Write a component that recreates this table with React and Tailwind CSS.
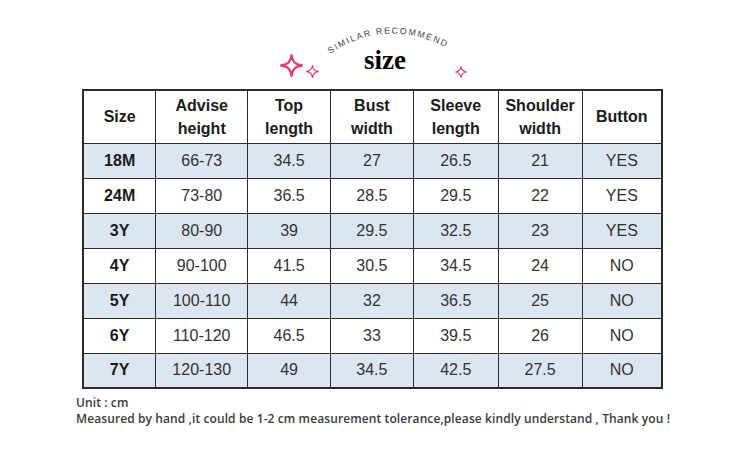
const headers = [
  ["Size"],
  ["Advise", "height"],
  ["Top", "length"],
  ["Bust", "width"],
  ["Sleeve", "length"],
  ["Shoulder", "width"],
  ["Button"],
];

const widths = ["w-[73px]", "w-[92px]", "w-[83px]", "w-[83px]", "w-[85px]", "w-[84px]", "w-[80px]"];

const rows = [
  ["18M", "66-73", "34.5", "27", "26.5", "21", "YES"],
  ["24M", "73-80", "36.5", "28.5", "29.5", "22", "YES"],
  ["3Y", "80-90", "39", "29.5", "32.5", "23", "YES"],
  ["4Y", "90-100", "41.5", "30.5", "34.5", "24", "NO"],
  ["5Y", "100-110", "44", "32", "36.5", "25", "NO"],
  ["6Y", "110-120", "46.5", "33", "39.5", "26", "NO"],
  ["7Y", "120-130", "49", "34.5", "42.5", "27.5", "NO"],
];

function Sparkle({ className }) {
  return (
    <svg viewBox="0 0 20 20" className={className}>
      <path
        d="M10 1 C11 7 13 9 19 10 C13 11 11 13 10 19 C9 13 7 11 1 10 C7 9 9 7 10 1 Z"
        fill="none"
        stroke="#e83e74"
        strokeWidth="2"
        strokeLinejoin="round"
      />
    </svg>
  );
}

export default function App() {
  return (
    <div className="h-[462px] w-[750px] bg-white font-['Liberation_Sans',Arial,sans-serif]">
      {/* title */}
      <div className="flex h-[89px] items-start pl-[280px]">
        <Sparkle className="mt-[54px] h-[23px] w-[23px]" />
        <Sparkle className="ml-[3px] mt-[65px] h-[13px] w-[13px]" />
        <div className="flex w-[136px] flex-col items-center pt-[28px]">
          <svg width="136" height="19" viewBox="0 0 136 19" className="overflow-visible">
            <defs>
              <path id="arc" d="M11 26 Q70 -14 136 24" fill="none" />
            </defs>
            <text fontSize="8.8" fill="#444" letterSpacing="1.6" fontFamily="Liberation Sans, Arial, sans-serif">
              <textPath href="#arc">SIMILAR   RECOMMEND</textPath>
            </text>
          </svg>
          <div className="ml-[-4px] font-['Liberation_Serif',serif] text-[27px] font-bold leading-none text-black">
            size
          </div>
        </div>
        <Sparkle className="mt-[66px] h-[12px] w-[12px]" />
      </div>

      {/* table */}
      <div className="ml-[82px] w-[581px]">
        <table className="border-collapse border-2 border-[#2b2b2b] text-center text-[16px] text-[#1a1a1a]">
          <thead>
            <tr className="h-[53px] bg-white">
              {headers.map((h, i) => (
                <th key={i} className={`${widths[i]} border border-[#2b2b2b] p-0 font-bold leading-[23px]`}>
                  {h.map((line) => (
                    <div key={line}>{line}</div>
                  ))}
                </th>
              ))}
            </tr>
          </thead>
          <tbody>
            {rows.map((r, ri) => (
              <tr key={r[0]} className={`h-[35px] ${ri % 2 === 0 ? "bg-[#dce6f1]" : "bg-white"}`}>
                {r.map((c, ci) => (
                  <td
                    key={ci}
                    className={`border border-[#2b2b2b] p-0 ${ci === 0 ? "font-bold" : "font-normal text-[#333]"}`}
                  >
                    {c}
                  </td>
                ))}
              </tr>
            ))}
          </tbody>
        </table>
      </div>

      {/* notes */}
      <div className="ml-[76px] mt-[6px] font-['Open_Sans',sans-serif] text-[12px] font-semibold leading-[16px] tracking-[0.1px] text-[#3a3a3a]">
        <div>Unit : cm</div>
        <div>Measured by hand ,it could be 1-2 cm measurement tolerance,please kindly understand , Thank you !</div>
      </div>
    </div>
  );
}
